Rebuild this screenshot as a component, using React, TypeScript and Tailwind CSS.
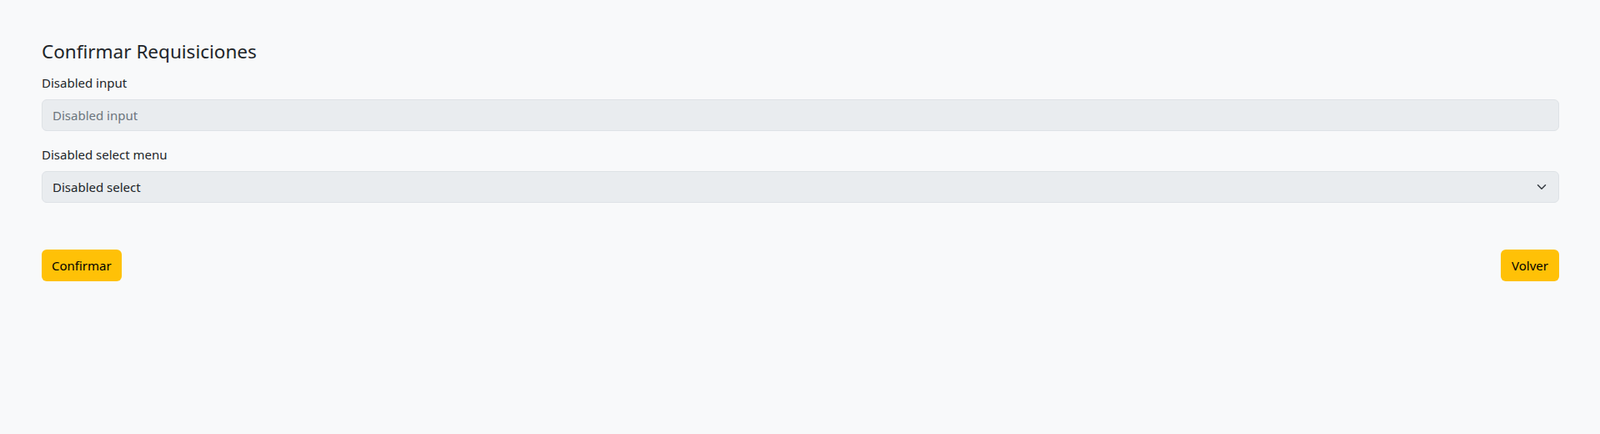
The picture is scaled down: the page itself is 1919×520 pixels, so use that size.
import React from "react";

const Label = ({ children }: { children: React.ReactNode }) => (
  <label className="block text-[15px] leading-[24px] text-[#212529] mb-2">
    {children}
  </label>
);

export default function App() {
  return (
    <div
      className="min-h-screen bg-[#f8f9fa] pl-[50px] pr-[49px] pt-[47px]"
      style={{ fontFamily: '"Noto Sans", "Open Sans", sans-serif' }}
    >
      <h4 className="text-[22.5px] leading-[29px] font-normal text-[#212529] mb-[11px]">
        Confirmar Requisiciones
      </h4>

      <div className="mb-4">
        <Label>Disabled input</Label>
        <input
          disabled
          placeholder="Disabled input"
          className="block w-full h-[38px] rounded-[6px] border border-[#dee2e6] bg-[#e9ecef] px-3 text-[15px] text-[#212529] placeholder:text-[#6c757d] outline-none"
        />
      </div>

      <div className="mb-[56px]">
        <Label>Disabled select menu</Label>
        <div className="flex items-center justify-between w-full h-[38px] rounded-[6px] border border-[#dee2e6] bg-[#e9ecef] pl-3 pr-3 text-[15px] text-[#212529]">
          <span>Disabled select</span>
          <svg width="16" height="12" viewBox="0 0 16 16" fill="none">
            <path
              d="m2 5 6 6 6-6"
              stroke="#343a40"
              strokeWidth="2"
              strokeLinecap="round"
              strokeLinejoin="round"
            />
          </svg>
        </div>
      </div>

      <div className="flex justify-between">
        <button className="h-[38px] px-3 rounded-[6px] bg-[#ffc107] text-[15px] text-black">
          Confirmar
        </button>
        <button className="h-[38px] px-[13px] rounded-[6px] bg-[#ffc107] text-[15px] text-black">
          Volver
        </button>
      </div>
    </div>
  );
}
